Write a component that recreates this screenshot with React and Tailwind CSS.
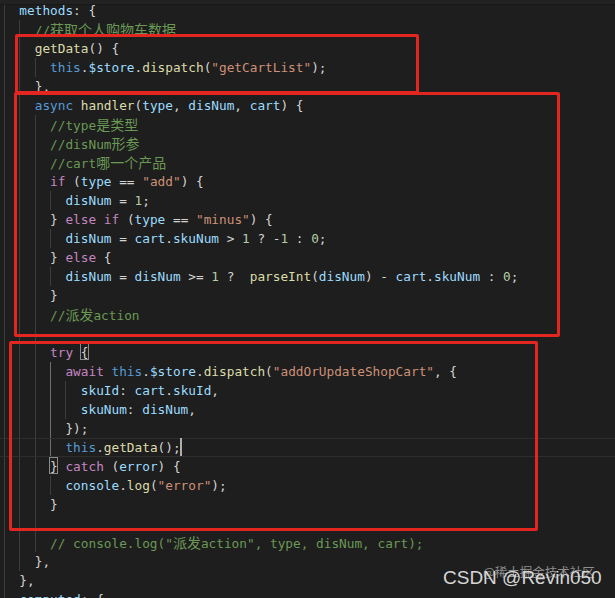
import React from 'react'

const P = '#d4d4d4'
const V = '#9cdcfe'
const F = '#dcdcaa'
const K = '#569cd6'
const C = '#c586c0'
const S = '#ce9178'
const N = '#b5cea8'
const G = '#6a9955'

const CH = 7.68
const X0 = 4

// [indent, tokens]
const LINES = [
  [2, [[V, 'methods'], [P, ': {']]],
  [4, [[G, '//获取个人购物车数据']]],
  [4, [[F, 'getData'], [P, '() {']]],
  [6, [[K, 'this'], [P, '.'], [V, '$store'], [P, '.'], [F, 'dispatch'], [P, '('], [S, '"getCartList"'], [P, ');']]],
  [4, [[P, '},']]],
  [4, [[K, 'async'], [P, ' '], [F, 'handler'], [P, '('], [V, 'type'], [P, ', '], [V, 'disNum'], [P, ', '], [V, 'cart'], [P, ') {']]],
  [6, [[G, '//type是类型']]],
  [6, [[G, '//disNum形参']]],
  [6, [[G, '//cart哪一个产品']]],
  [6, [[C, 'if'], [P, ' ('], [V, 'type'], [P, ' == '], [S, '"add"'], [P, ') {']]],
  [8, [[V, 'disNum'], [P, ' = '], [N, '1'], [P, ';']]],
  [6, [[P, '} '], [C, 'else'], [P, ' '], [C, 'if'], [P, ' ('], [V, 'type'], [P, ' == '], [S, '"minus"'], [P, ') {']]],
  [8, [[V, 'disNum'], [P, ' = '], [V, 'cart'], [P, '.'], [V, 'skuNum'], [P, ' > '], [N, '1'], [P, ' ? -'], [N, '1'], [P, ' : '], [N, '0'], [P, ';']]],
  [6, [[P, '} '], [C, 'else'], [P, ' {']]],
  [8, [[V, 'disNum'], [P, ' = '], [V, 'disNum'], [P, ' >= '], [N, '1'], [P, ' ?  '], [F, 'parseInt'], [P, '('], [V, 'disNum'], [P, ') - '], [V, 'cart'], [P, '.'], [V, 'skuNum'], [P, ' : '], [N, '0'], [P, ';']]],
  [6, [[P, '}']]],
  [6, [[G, '//派发action']]],
  [6, [], true],
  [6, [[C, 'try'], [P, ' {']]],
  [8, [[C, 'await'], [P, ' '], [K, 'this'], [P, '.'], [V, '$store'], [P, '.'], [F, 'dispatch'], [P, '('], [S, '"addOrUpdateShopCart"'], [P, ', {']]],
  [10, [[V, 'skuId'], [P, ': '], [V, 'cart'], [P, '.'], [V, 'skuId'], [P, ',']]],
  [10, [[V, 'skuNum'], [P, ': '], [V, 'disNum'], [P, ',']]],
  [8, [[P, '});']]],
  [8, [[K, 'this'], [P, '.'], [F, 'getData'], [P, '();']]],
  [6, [[P, '} '], [C, 'catch'], [P, ' ('], [V, 'error'], [P, ') {']]],
  [8, [[V, 'console'], [P, '.'], [F, 'log'], [P, '('], [S, '"error"'], [P, ');']]],
  [6, [[P, '}']]],
  [6, [], true],
  [6, [[G, '// console.log("派发action", type, disNum, cart);']]],
  [4, [[P, '},']]],
  [2, [[P, '},']]],
  [2, [[V, 'computed'], [P, ': {']]],
]

const CJK = /([\u4e00-\u9fff]+)/

function Txt({ color, text }) {
  const parts = text.split(CJK)
  return (
    <span style={{ color }}>
      {parts.map((p, i) =>
        CJK.test(p) ? (
          <span key={i} className="font-['Noto_Sans_CJK_SC',sans-serif] text-[14px]">
            {p}
          </span>
        ) : (
          p
        )
      )}
    </span>
  )
}

function Line({ indent, tokens, blank, idx }) {
  const guideTo = blank ? 6 : indent
  const guides = []
  for (let c = 0; c < guideTo; c += 2) guides.push(c)
  const active = idx >= 19 && idx <= 23
  return (
    <div className={`relative h-[19px] leading-[19px] whitespace-pre ${idx === 23 ? 'border-y border-[#2e2e2e]' : ''}`}>
      {guides.map((c) => (
        <span
          key={c}
          className={`absolute top-0 bottom-0 w-px ${active && c === 6 ? 'bg-[#6f6f6f]' : 'bg-[#3d3d3d]'}`}
          style={{ left: X0 + c * CH }}
        />
      ))}
      <div style={{ paddingLeft: X0 + indent * CH }} className={idx === 23 ? '-mt-px' : ''}>
        {tokens.map(([color, text], i) => (
          <Txt key={i} color={color} text={text} />
        ))}
      </div>
    </div>
  )
}

export default function App() {
  return (
    <div className="relative w-[615px] h-[598px] overflow-hidden bg-[#1e1e1e] font-['DejaVu_Sans_Mono',monospace] text-[12.75px]">
      <div className="h-[5px] bg-[#222222] border-b border-[#181818] -mb-[5px] relative z-10" />
      <div className="pt-px">
        {LINES.map(([indent, tokens, blank], i) => (
          <Line key={i} idx={i} indent={indent} tokens={tokens} blank={blank} />
        ))}
      </div>

      {/* bracket match boxes + cursor */}
      <span className="absolute border border-[#8a8a8a] w-[9px] h-[17px] left-[80px] top-[343px]" />
      <span className="absolute border border-[#8a8a8a] w-[9px] h-[17px] left-[49px] top-[457px]" />
      <span className="absolute w-[2px] h-[18px] bg-[#aeafad] left-[180px] top-[438px]" />

      {/* red annotation boxes */}
      <div className="absolute left-[15px] top-[34px] w-[404px] h-[60px] border-[3px] border-[#e3261f] rounded-[2px]" />
      <div className="absolute left-[14px] top-[92px] w-[546px] h-[245px] border-[3px] border-[#e3261f] rounded-[2px]" />
      <div className="absolute left-[9px] top-[341px] w-[529px] h-[190px] border-[3px] border-[#e3261f] rounded-[2px]" />

      {/* watermark */}
      <div className="absolute left-[483px] top-[563px] text-[12.5px] text-[#8e8e8e] font-['Noto_Sans_CJK_SC',sans-serif] whitespace-nowrap">
        @稀土掘金技术社区
      </div>
      <div className="absolute left-[443px] top-[567px] text-[19px] leading-[22px] text-[#d6d6d6] font-['Liberation_Sans',sans-serif] whitespace-nowrap">
        CSDN @Revin050
      </div>
    </div>
  )
}
